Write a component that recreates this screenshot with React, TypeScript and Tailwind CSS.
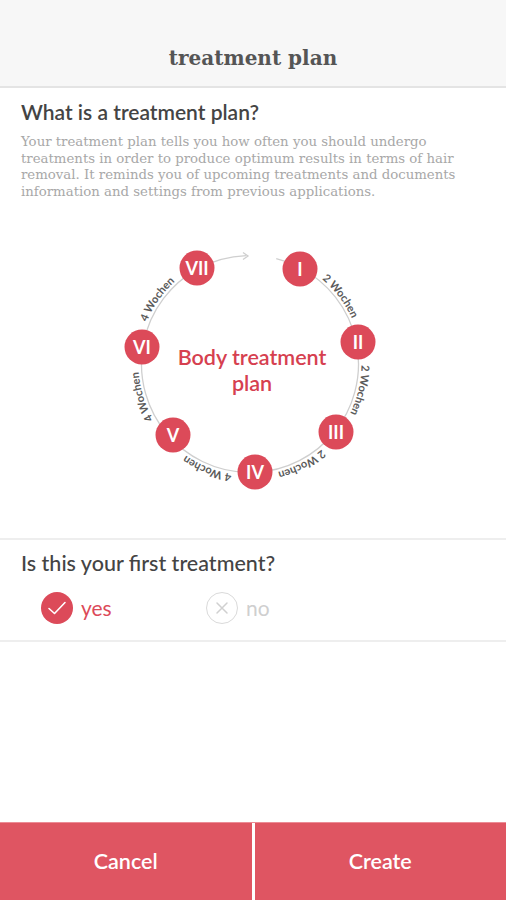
const RED = '#dc4a59';
const CX = 250;
const CY = 364;
const R = 108.5;

const nodes = [
  { label: 'I', x: 300, y: 269 },
  { label: 'II', x: 358, y: 342 },
  { label: 'III', x: 336, y: 432 },
  { label: 'IV', x: 255, y: 472 },
  { label: 'V', x: 173, y: 435 },
  { label: 'VI', x: 142, y: 347 },
  { label: 'VII', x: 197, y: 268 },
];

const labels = [
  { a: -36.9, text: '2 Wochen' },
  { a: 13.4, text: '2 Wochen' },
  { a: 62.8, text: '2 Wochen' },
  { a: 112.3, text: '4 Wochen' },
  { a: 163.1, text: '4 Wochen' },
  { a: 215, text: '4 Wochen' },
];

function pt(deg: number, r: number) {
  const t = (deg * Math.PI) / 180;
  return [CX + r * Math.cos(t), CY + r * Math.sin(t)];
}

function arc(from: number, to: number, r: number) {
  const [x1, y1] = pt(from, r);
  const [x2, y2] = pt(to, r);
  const large = to - from > 180 ? 1 : 0;
  return `M${x1} ${y1} A${r} ${r} 0 ${large} 1 ${x2} ${y2}`;
}

function Cycle() {
  return (
    <svg width="506" height="333" viewBox="0 205 506 333" className="block">
      <g fill="none" stroke="#cfcfcf" strokeWidth="1.3">
        <path d={arc(-62, 241, R)} />
        <path d={arc(241, 268, R)} />
        <path d={arc(284, 296, R)} />
        <path d="M243 252.5 L248 256 L243 259.5" />
      </g>
      <defs>
        {labels.map((l, i) => (
          <path key={i} id={`lbl${i}`} d={arc(l.a - 40, l.a + 40, R + 3)} />
        ))}
      </defs>
      {labels.map((l, i) => (
        <text key={i} fontSize="11" fill="#5a5a5a" fontFamily="Lato, sans-serif" fontWeight="700">
          <textPath href={`#lbl${i}`} startOffset="50%" textAnchor="middle">
            {l.text}
          </textPath>
        </text>
      ))}
      {nodes.map((n) => (
        <g key={n.label}>
          <circle cx={n.x} cy={n.y} r="17.5" fill={RED} />
          <text
            x={n.x}
            y={n.y + 6.5}
            textAnchor="middle"
            fontSize="18"
            fontWeight="700"
            fill="#fff"
            fontFamily="Lato, sans-serif"
          >
            {n.label}
          </text>
        </g>
      ))}
      <text textAnchor="middle" fill="#d6404f" fontSize="21.5" fontWeight="600" fontFamily="Lato, sans-serif">
        <tspan x="252" y="365">Body treatment</tspan>
        <tspan x="252" y="391">plan</tspan>
      </text>
    </svg>
  );
}

export default function App() {
  return (
    <div className="min-h-screen h-[900px] flex flex-col bg-white font-['Lato',sans-serif]">
      <header className="h-[88px] bg-[#f7f7f7] border-b-2 border-[#e4e4e4] flex items-end justify-center pb-[18px]">
        <h1 className="font-['DejaVu_Serif',serif] font-bold text-[20px] text-[#555] leading-none">
          treatment plan
        </h1>
      </header>

      <section className="px-[21px] pt-[11px]">
        <h2 className="text-[21px] font-semibold text-[#444] leading-[26px]">What is a treatment plan?</h2>
        <p className="mt-[9px] font-['DejaVu_Serif',serif] text-[13.3px] leading-[16.5px] text-[#a8a8a8] whitespace-nowrap">
          Your treatment plan tells you how often you should undergo
          <br />
          treatments in order to produce optimum results in terms of hair
          <br />
          removal. It reminds you of upcoming treatments and documents
          <br />
          information and settings from previous applications.
        </p>
      </section>

      <div className="mt-[5px] border-b-2 border-[#eeeeee]">
        <Cycle />
      </div>

      <section className="px-[21px] pt-[10px] border-b-2 border-[#eeeeee]">
        <h2 className="text-[21.5px] font-medium text-[#444] leading-[26px]">Is this your first treatment?</h2>
        <div className="flex items-center h-[64px] pl-[20px]">
          <div className="flex items-center gap-[8px] w-[165px]">
            <span className="w-[32px] h-[32px] rounded-full bg-[#dc4a59] flex items-center justify-center">
              <svg width="22" height="22" viewBox="0 0 22 22" fill="none" stroke="#fff" strokeWidth="1.6" strokeLinecap="round" strokeLinejoin="round">
                <path d="M3 11.5 L8.5 16.5 L19 5.5" />
              </svg>
            </span>
            <span className="text-[21px] text-[#dc4a59]">yes</span>
          </div>
          <div className="flex items-center gap-[8px]">
            <span className="w-[32px] h-[32px] rounded-full border-[1.5px] border-[#dadada] flex items-center justify-center">
              <svg width="14" height="14" viewBox="0 0 14 14" stroke="#d0d0d0" strokeWidth="1.5" strokeLinecap="round">
                <path d="M2 2 L12 12 M12 2 L2 12" />
              </svg>
            </span>
            <span className="text-[21px] text-[#cfcfcf]">no</span>
          </div>
        </div>
      </section>

      <footer className="mt-auto h-[78px] flex border-t border-[#ec8c95]">
        <button className="flex-1 bg-[#df5562] text-white text-[21.5px] font-semibold">Cancel</button>
        <div className="w-[3px] bg-white" />
        <button className="flex-1 bg-[#df5562] text-white text-[21.5px] font-semibold">Create</button>
      </footer>
    </div>
  );
}
